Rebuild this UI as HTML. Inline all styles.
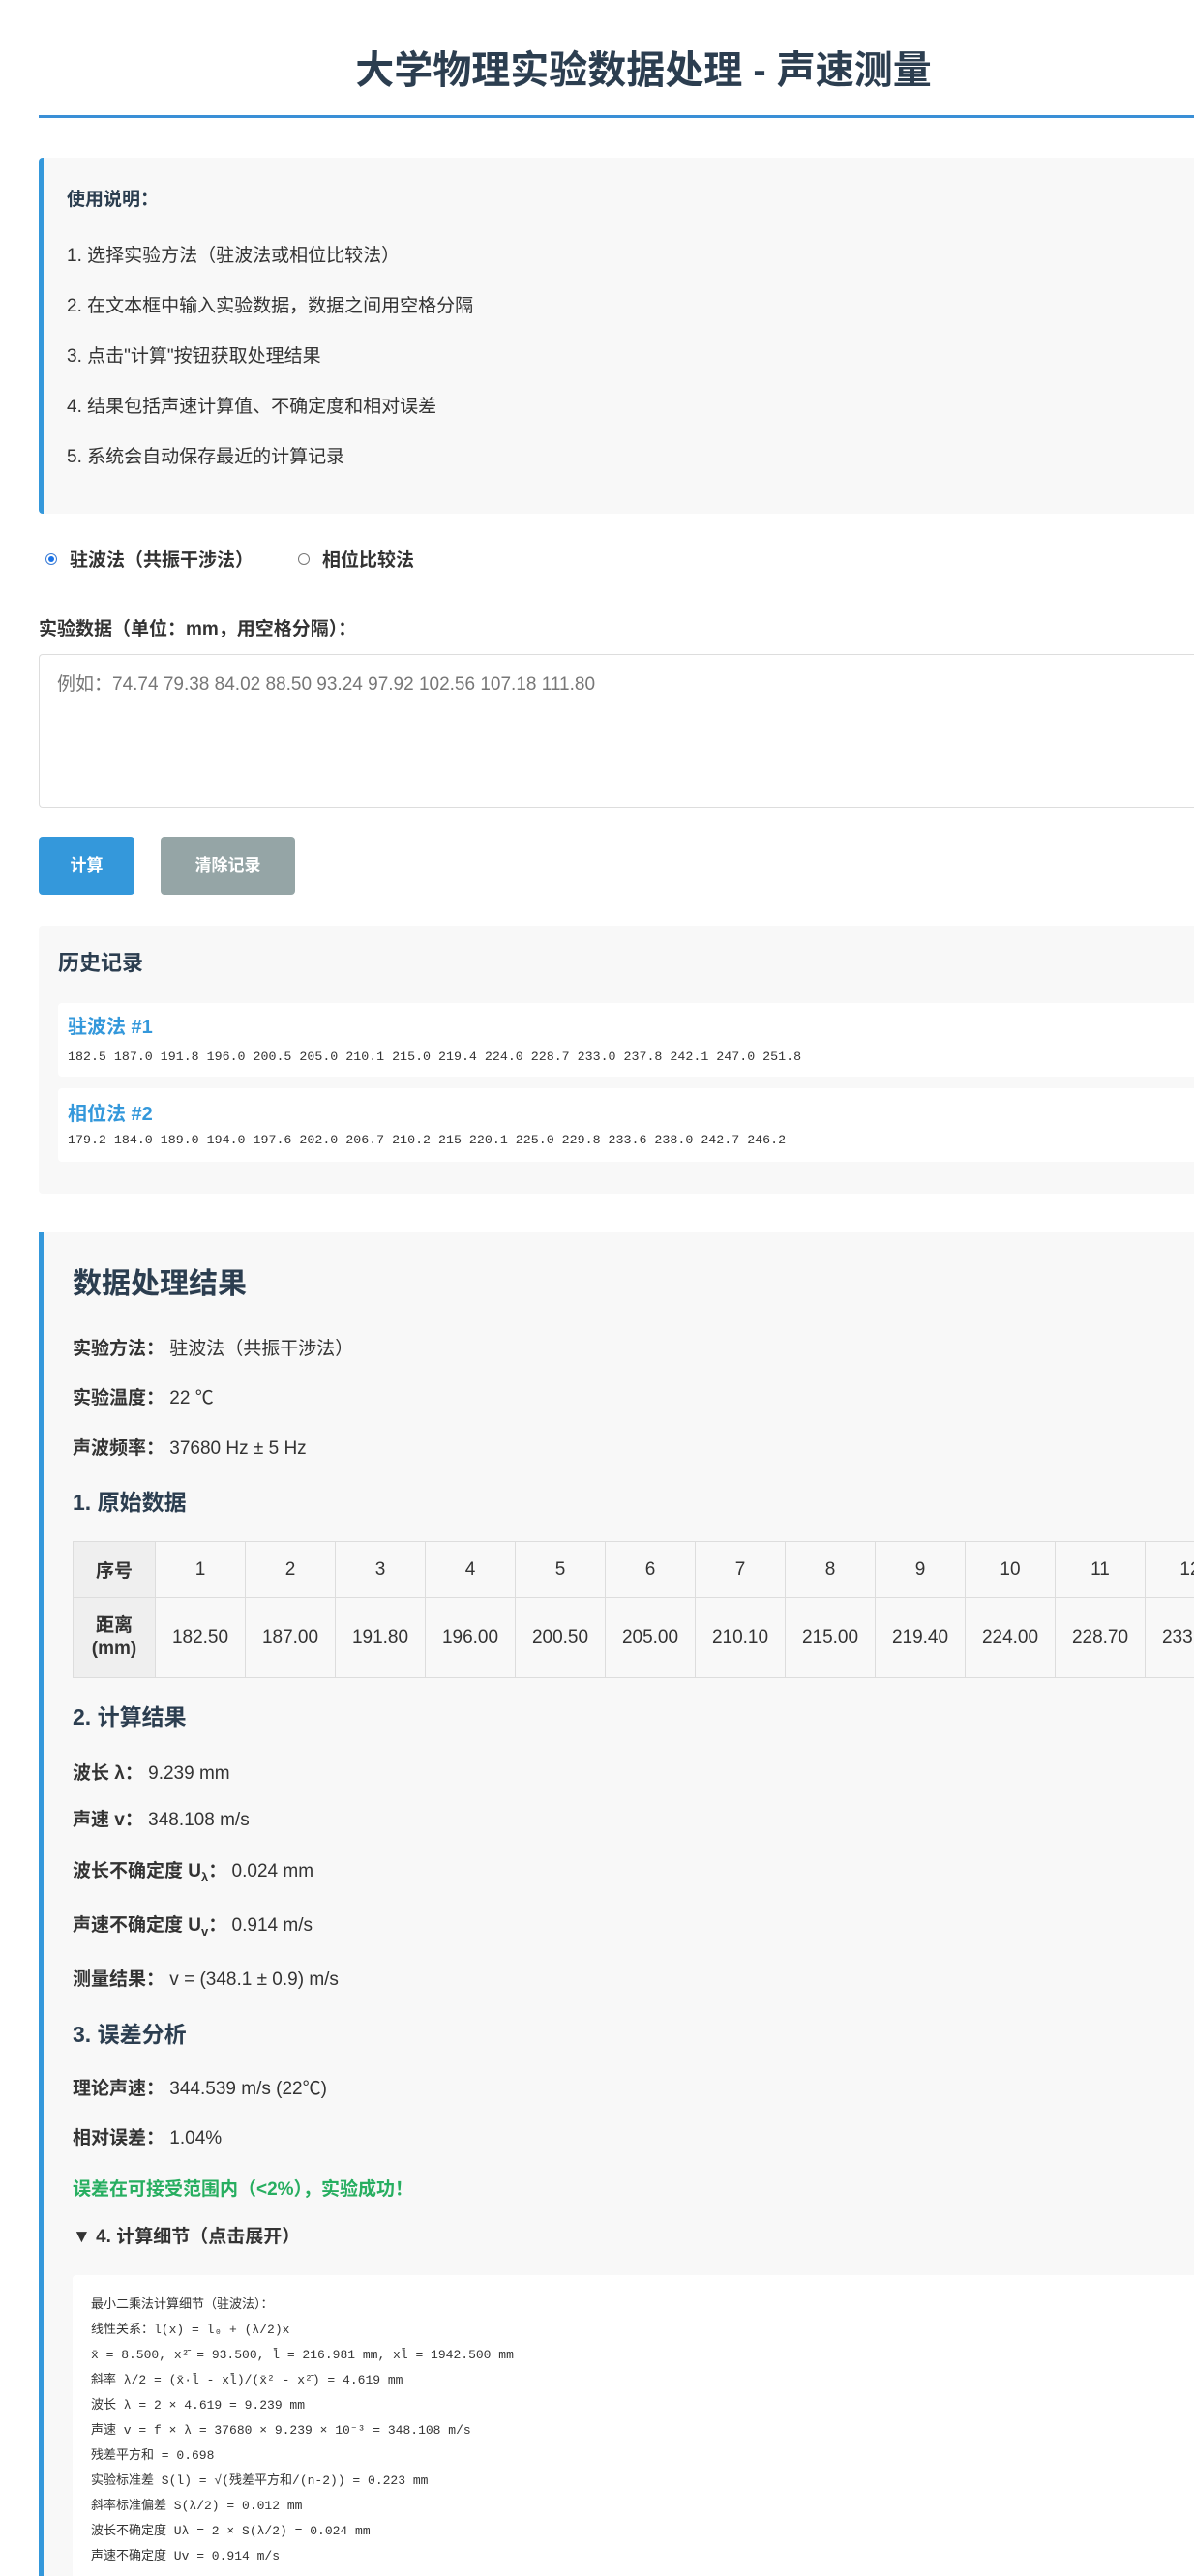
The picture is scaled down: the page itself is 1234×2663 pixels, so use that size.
<!DOCTYPE html>
<html><head><meta charset="utf-8"><style>
html,body{margin:0;padding:0;width:1234px;height:2663px;overflow:hidden;background:#fff;}
body{font-family:"Liberation Sans","Noto Sans CJK SC",sans-serif;color:#333;position:relative;}
.a{position:absolute;white-space:nowrap;}
.c{line-height:30px;height:30px;}
.title{left:40px;width:1250px;text-align:center;top:48px;font-size:40px;font-weight:bold;color:#2c3e50;line-height:50px;}
.hr{left:40px;width:1194px;top:119px;height:3px;background:#3a8fd6;}
.box{background:#f8f8f8;}
.inst{left:40px;top:163px;width:1189px;height:368px;border-left:5px solid #3498db;border-radius:4px 0 0 4px;}
.fs19{font-size:19px;}
b{font-weight:bold;}
.mono{font-family:"Liberation Mono","Noto Sans CJK SC",monospace;}
.btn{color:#fff;font-weight:bold;font-size:17px;text-align:center;line-height:60px;height:60px;border-radius:4px;top:865px;}
table{border-collapse:collapse;font-size:19px;table-layout:fixed;width:1573px;}
td{border:1px solid #ddd;text-align:center;width:93px;padding:0;overflow:hidden;}
td.h{background:#efefef;font-weight:bold;width:85px;}
</style></head><body>
<div class="a" style="left:0;top:0;width:1234px;height:2663px;overflow:hidden">
<div class="a title" style="left:40px;width:1250px">大学物理实验数据处理 - 声速测量</div>
</div>
<div class="a hr"></div>

<div class="a box inst"></div>
<div class="a c fs19" style="left:69px;top:192px;font-weight:bold;color:#2c3e50">使用说明：</div>
<div class="a c fs19" style="left:69px;top:250px">1. 选择实验方法（驻波法或相位比较法）</div>
<div class="a c fs19" style="left:69px;top:302px">2. 在文本框中输入实验数据，数据之间用空格分隔</div>
<div class="a c fs19" style="left:69px;top:354px">3. 点击"计算"按钮获取处理结果</div>
<div class="a c fs19" style="left:69px;top:406px">4. 结果包括声速计算值、不确定度和相对误差</div>
<div class="a c fs19" style="left:69px;top:458px">5. 系统会自动保存最近的计算记录</div>

<div class="a" style="left:47px;top:572px;width:12px;height:12px;border:1px solid #3a7bd5;border-radius:50%;box-sizing:border-box;"><div style="margin:2px;width:6px;height:6px;border-radius:50%;background:#1a73e8"></div></div>
<div class="a c fs19" style="left:72px;top:565px;font-weight:bold">驻波法（共振干涉法）</div>
<div class="a" style="left:308px;top:572px;width:12px;height:12px;border:1px solid #777;border-radius:50%;box-sizing:border-box;"></div>
<div class="a c fs19" style="left:333px;top:565px;font-weight:bold">相位比较法</div>

<div class="a c fs19" style="left:40px;top:636px;font-weight:bold">实验数据（单位：mm，用空格分隔）：</div>
<div class="a" style="left:40px;top:676px;width:1194px;height:159px;border:1px solid #ddd;border-right:none;border-radius:4px 0 0 4px;box-sizing:border-box;"></div>
<div class="a c fs19" style="left:59px;top:693px;color:#777">例如：74.74 79.38 84.02 88.50 93.24 97.92 102.56 107.18 111.80</div>

<div class="a btn" style="left:40px;width:99px;background:#3498db">计算</div>
<div class="a btn" style="left:166px;width:139px;background:#95a5a6">清除记录</div>

<div class="a box" style="left:40px;top:957px;width:1194px;height:277px;border-radius:4px 0 0 4px"></div>
<div class="a c" style="left:60px;top:981px;font-size:22px;font-weight:bold;color:#2c3e50">历史记录</div>
<div class="a" style="left:60px;top:1037px;width:1174px;height:76px;background:#fff;border-radius:4px 0 0 4px"></div>
<div class="a c" style="left:70px;top:1047px;font-size:20px;font-weight:bold;color:#3498db">驻波法 #1</div>
<div class="a mono" style="left:70px;top:1084px;font-size:13.3px;line-height:18px">182.5 187.0 191.8 196.0 200.5 205.0 210.1 215.0 219.4 224.0 228.7 233.0 237.8 242.1 247.0 251.8</div>
<div class="a" style="left:60px;top:1125px;width:1174px;height:76px;background:#fff;border-radius:4px 0 0 4px"></div>
<div class="a c" style="left:70px;top:1137px;font-size:20px;font-weight:bold;color:#3498db">相位法 #2</div>
<div class="a mono" style="left:70px;top:1170px;font-size:13.3px;line-height:18px">179.2 184.0 189.0 194.0 197.6 202.0 206.7 210.2 215 220.1 225.0 229.8 233.6 238.0 242.7 246.2</div>

<div class="a box" style="left:40px;top:1274px;width:1189px;height:1389px;border-left:5px solid #3498db"></div>
<div class="a" style="left:75px;top:1308px;font-size:30px;font-weight:bold;color:#2c3e50;line-height:40px">数据处理结果</div>
<div class="a c fs19" style="left:75px;top:1380px"><b>实验方法：</b> 驻波法（共振干涉法）</div>
<div class="a c fs19" style="left:75px;top:1431px"><b>实验温度：</b> 22 ℃</div>
<div class="a c fs19" style="left:75px;top:1483px"><b>声波频率：</b> 37680 Hz ± 5 Hz</div>
<div class="a" style="left:75px;top:1538px;font-size:23px;font-weight:bold;color:#2c3e50;line-height:30px">1. 原始数据</div>

<div class="a" style="left:75px;top:1593px;width:1159px;height:145px;overflow:hidden">
<table>
<colgroup><col style="width:85px"><col span="16" style="width:93px"></colgroup>
<tr style="height:58px"><td class="h">序号</td><td>1</td><td>2</td><td>3</td><td>4</td><td>5</td><td>6</td><td>7</td><td>8</td><td>9</td><td>10</td><td>11</td><td>12</td><td>13</td><td>14</td><td>15</td><td>16</td></tr>
<tr style="height:83px"><td class="h" style="line-height:24px">距离<br>(mm)</td><td>182.50</td><td>187.00</td><td>191.80</td><td>196.00</td><td>200.50</td><td>205.00</td><td>210.10</td><td>215.00</td><td>219.40</td><td>224.00</td><td>228.70</td><td>233.00</td><td>237.80</td><td>242.10</td><td>247.00</td><td>251.80</td></tr>
</table>
</div>

<div class="a" style="left:75px;top:1760px;font-size:23px;font-weight:bold;color:#2c3e50;line-height:30px">2. 计算结果</div>
<div class="a c fs19" style="left:75px;top:1819px"><b>波长 λ：</b> 9.239 mm</div>
<div class="a c fs19" style="left:75px;top:1867px"><b>声速 v：</b> 348.108 m/s</div>
<div class="a c fs19" style="left:75px;top:1920px"><b>波长不确定度 U<sub style="font-size:13px">λ</sub>：</b> 0.024 mm</div>
<div class="a c fs19" style="left:75px;top:1976px"><b>声速不确定度 U<sub style="font-size:13px">v</sub>：</b> 0.914 m/s</div>
<div class="a c fs19" style="left:75px;top:2032px"><b>测量结果：</b> v = (348.1 ± 0.9) m/s</div>
<div class="a" style="left:75px;top:2088px;font-size:23px;font-weight:bold;color:#2c3e50;line-height:30px">3. 误差分析</div>
<div class="a c fs19" style="left:75px;top:2145px"><b>理论声速：</b> 344.539 m/s (22℃)</div>
<div class="a c fs19" style="left:75px;top:2196px"><b>相对误差：</b> 1.04%</div>
<div class="a c fs19" style="left:75px;top:2249px;color:#27ae60;font-weight:bold">误差在可接受范围内（&lt;2%），实验成功！</div>
<div class="a c fs19" style="left:75px;top:2298px;font-weight:bold">▼ 4. 计算细节（点击展开）</div>

<div class="a" style="left:75px;top:2352px;width:1159px;height:311px;background:#fff;border-radius:4px 0 0 0"></div>
<div class="a mono" style="left:94px;top:2370px;font-size:13px;line-height:26px;color:#333;white-space:pre">最小二乘法计算细节（驻波法）：
线性关系：l(x) = l₀ + (λ/2)x
x̄ = 8.500, x²̄ = 93.500, l̄ = 216.981 mm, xl̄ = 1942.500 mm
斜率 λ/2 = (x̄·l̄ - xl̄)/(x̄² - x²̄) = 4.619 mm
波长 λ = 2 × 4.619 = 9.239 mm
声速 v = f × λ = 37680 × 9.239 × 10⁻³ = 348.108 m/s
残差平方和 = 0.698
实验标准差 S(l) = √(残差平方和/(n-2)) = 0.223 mm
斜率标准偏差 S(λ/2) = 0.012 mm
波长不确定度 Uλ = 2 × S(λ/2) = 0.024 mm
声速不确定度 Uv = 0.914 m/s</div>
</body></html>
